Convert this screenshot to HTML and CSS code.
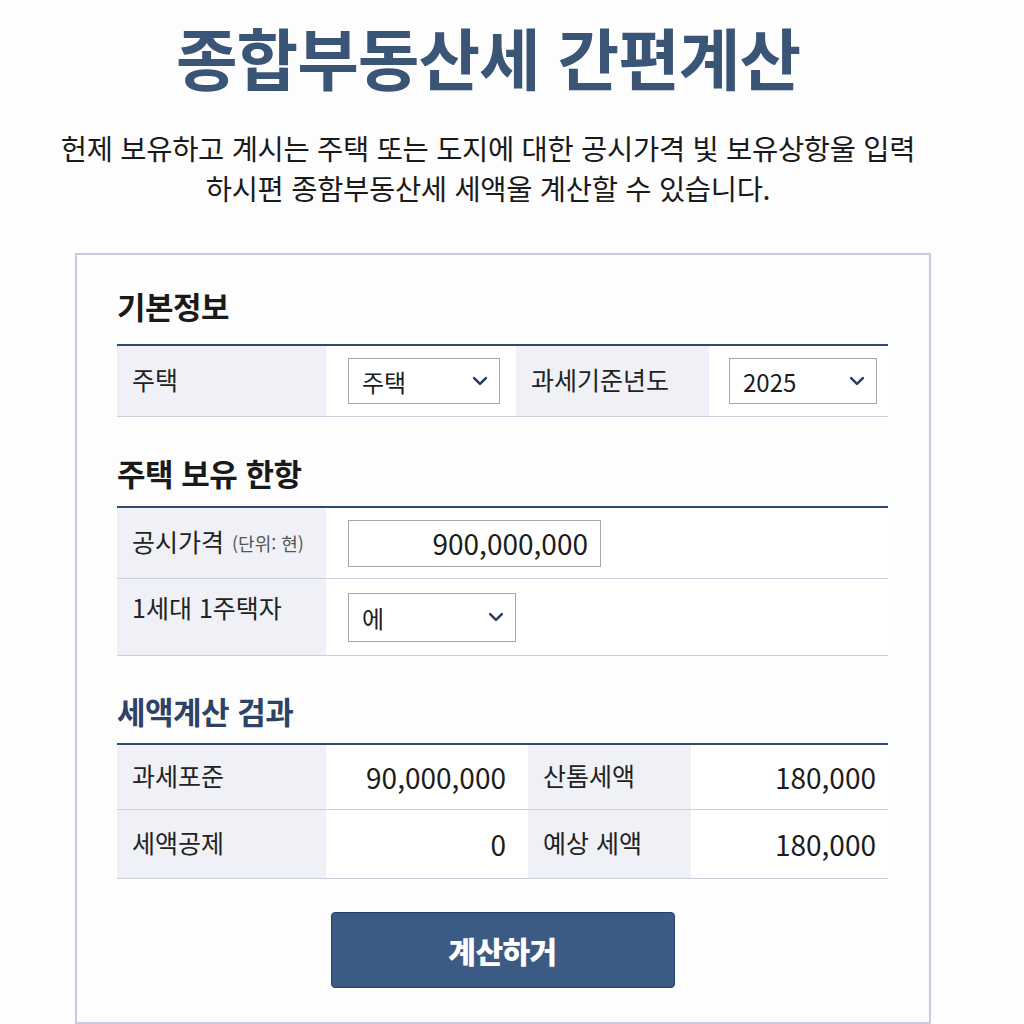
FILE: index.html
```html
<!DOCTYPE html>
<html lang="ko">
<head>
<meta charset="utf-8">
<title>종합부동산세 간편계산</title>
<link rel="stylesheet" href="styles.css">
</head>
<body>
<header class="hero">
  <h1 class="title">종합부동산세 간편계산</h1>
  <p class="lead">헌제 보유하고 계시는 주택 또는 도지에 대한 공시가격 빛 보유상항울 입력<br>하시편 종함부동산세 세액울 계산할 수 있습니다.</p>
</header>

<main class="card">
  <section class="sec">
    <h2 class="sec-title">기본정보</h2>
    <div class="grid grid-basic">
      <div class="cell label">주택</div>
      <div class="cell value">
        <div class="select sel-type"><span>주택</span><svg class="chev" viewBox="0 0 12 8"><path d="M1 1.5l5 5 5-5"/></svg></div>
      </div>
      <div class="cell label">과세기준년도</div>
      <div class="cell value val-year">
        <div class="select sel-year"><span>2025</span><svg class="chev" viewBox="0 0 12 8"><path d="M1 1.5l5 5 5-5"/></svg></div>
      </div>
    </div>
  </section>

  <section class="sec">
    <h2 class="sec-title sec-hold">주택 보유 한항</h2>
    <div class="grid grid-hold">
      <div class="cell label row-a">공시가격 <small class="unit">(단위: 현)</small></div>
      <div class="cell value row-a">
        <div class="input">900,000,000</div>
      </div>
      <div class="cell label row-b">1세대 1주택자</div>
      <div class="cell value row-b">
        <div class="select sel-yes"><span>에</span><svg class="chev" viewBox="0 0 12 8"><path d="M1 1.5l5 5 5-5"/></svg></div>
      </div>
    </div>
  </section>

  <section class="sec">
    <h2 class="sec-title sec-result">세액계산 검과</h2>
    <div class="grid grid-result">
      <div class="cell label r1">과세포준</div>
      <div class="cell num r1 num-a">90,000,000</div>
      <div class="cell label r1">산톰세액</div>
      <div class="cell num r1 num-b">180,000</div>
      <div class="cell label r2">세액공제</div>
      <div class="cell num r2 num-a">0</div>
      <div class="cell label r2">예상 세액</div>
      <div class="cell num r2 num-b">180,000</div>
    </div>
  </section>

  <div class="actions">
    <button class="btn" type="button">계산하거</button>
  </div>
</main>
</body>
</html>
```
FILE: styles.css
```css
* { box-sizing: border-box; }

html, body {
  margin: 0;
  padding: 0;
  background: #fdfdfe;
  font-family: "Noto Sans CJK KR", "Noto Sans", sans-serif;
  color: #1c1c1c;
}

.hero {
  padding-right: 48px;
  text-align: center;
}

.title {
  margin: 0;
  padding-top: 10px;
  font-size: 67px;
  line-height: 92px;
  font-weight: 700;
  letter-spacing: -1px;
  color: #3b5577;
}

.lead {
  margin: 26px 0 0;
  font-size: 28.5px;
  line-height: 40px;
  letter-spacing: -0.3px;
  color: #1a1a1a;
}

.card {
  width: 856px;
  margin: 45px 0 0 75px;
  border: 2px solid #c4cce0;
  padding: 0 41px 31px 40px;
  height: 771px;
}

.sec-title {
  margin: 0;
  padding: 33px 0 20px;
  font-size: 31px;
  line-height: 36px;
  font-weight: 700;
  letter-spacing: -0.5px;
  color: #1a1a1a;
  border-bottom: 2px solid #2e4a6e;
}

.sec-hold {
  padding: 38px 0 15px;
}

.sec-result {
  padding: 37px 0 14px;
  color: #2d4264;
}

.grid {
  display: grid;
}

.grid-basic {
  grid-template-columns: 209px 190px 193px 179px;
  grid-template-rows: 71px;
}

.grid-hold {
  grid-template-columns: 209px 1fr;
  grid-template-rows: 71px 77px;
}

.grid-result {
  grid-template-columns: 209px 202px 163px 197px;
  grid-template-rows: 65px 69px;
}

.cell {
  display: flex;
  align-items: center;
  border-bottom: 1px solid #c9cfdc;
  font-size: 25px;
  color: #222;
}

.label {
  background: #eff1f6;
  padding-left: 15px;
  padding-bottom: 4px;
}

.value {
  background: #fff;
  padding-left: 22px;
}

.val-year {
  padding-left: 20px;
}

.unit {
  font-size: 18px;
  color: #555;
  margin-left: 8px;
  margin-top: 4px;
}

.row-b.label {
  align-items: flex-start;
  padding-top: 10px;
}

.select {
  display: flex;
  align-items: center;
  justify-content: space-between;
  height: 46px;
  border: 1px solid #a3a8b1;
  background: #fff;
  padding: 0 12px 0 13px;
  font-size: 24px;
  color: #1c1c1c;
}

.sel-type { width: 152px; }
.sel-year { width: 148px; }
.sel-yes { width: 168px; height: 49px; }

.chev {
  width: 14px;
  height: 10px;
  fill: none;
  stroke: #2a3f60;
  stroke-width: 2.2;
  stroke-linecap: round;
  stroke-linejoin: round;
}

.input {
  width: 253px;
  height: 47px;
  border: 1px solid #a3a8b1;
  display: flex;
  align-items: center;
  justify-content: flex-end;
  padding-right: 12px;
  font-size: 28px;
  color: #1c1c1c;
}

.num {
  background: #fff;
  justify-content: flex-end;
  font-size: 28px;
  color: #1c1c1c;
}

.num-a { padding-right: 22px; }
.num-b { padding-right: 12px; }

.actions {
  display: flex;
  justify-content: center;
  padding-top: 33px;
}

.btn {
  width: 344px;
  height: 76px;
  background: #3b5b84;
  border: 1px solid #244269;
  border-radius: 4px;
  color: #fff;
  font-family: "Noto Sans CJK KR", sans-serif;
  font-size: 30px;
  font-weight: 900;
  letter-spacing: -0.5px;
}
```
